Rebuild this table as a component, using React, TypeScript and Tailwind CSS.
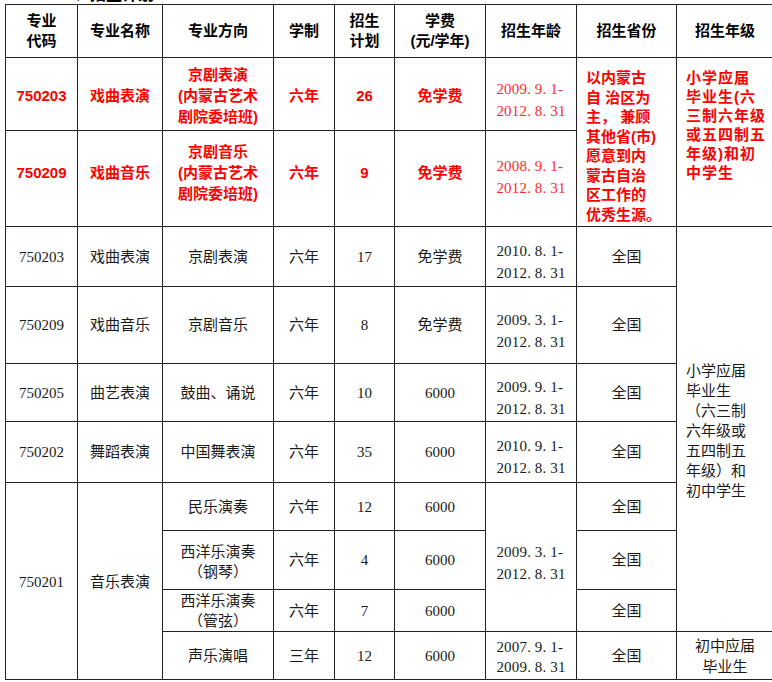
import React from "react";

const SANS = "font-['Liberation_Sans','Noto_Sans_CJK_SC',sans-serif]";
const SERIF = "font-['Liberation_Serif','Noto_Sans_CJK_SC',serif]";

function D({ s }: { s: string }) {
  return (
    <span className="inline-flex">
      {s.split("").map((c, i) => (
        <span key={i} className="inline-block w-[7.7px] text-left">
          {c}
        </span>
      ))}
    </span>
  );
}

function Dates({ a, b, red, pad }: { a: string; b: string; red?: boolean; pad: string }) {
  return (
    <div
      className={`flex flex-col items-center leading-[22px] text-[15px] ${SERIF} ${pad} ${
        red ? "text-[#ff2a2a]" : "text-[#1a1a1a]"
      }`}
    >
      <D s={a} />
      <D s={b} />
    </div>
  );
}

const td = "border border-[#222] text-center align-middle p-0";
const hd = `${td} ${SANS} font-bold text-[15px] leading-[20px] text-black`;
const rd = `${td} ${SANS} font-bold text-[15px] leading-[21px] text-[#ff0000]`;
const bd = `${td} ${SERIF} text-[15px] leading-[20px] text-[#1a1a1a]`;

export default function App() {
  return (
    <div className="w-[772px] h-[682px] overflow-hidden bg-white pl-[5px]">
      <div className="h-[4px] overflow-hidden flex items-end pl-[69px]">
        <span className={`${SANS} font-bold text-[16px] leading-[19px] whitespace-nowrap`}>、招生计划</span>
      </div>
      <table className="table-fixed border-collapse w-[768px]">
        <colgroup>
          <col className="w-[72px]" />
          <col className="w-[85px]" />
          <col className="w-[111px]" />
          <col className="w-[61px]" />
          <col className="w-[60px]" />
          <col className="w-[91px]" />
          <col className="w-[91px]" />
          <col className="w-[100px]" />
          <col className="w-[97px]" />
        </colgroup>
        <tbody>
          <tr className="h-[53px]">
            <td className={hd}>专业<br />代码</td>
            <td className={hd}>专业名称</td>
            <td className={hd}>专业方向</td>
            <td className={hd}>学制</td>
            <td className={hd}>招生<br />计划</td>
            <td className={hd}>学费<br />(元/学年)</td>
            <td className={hd}>招生年龄</td>
            <td className={hd}>招生省份</td>
            <td className={hd}>招生年级</td>
          </tr>
          <tr className="h-[73px]">
            <td className={`${rd} pt-[3px]`}>750203</td>
            <td className={`${rd} pt-[3px]`}>戏曲表演</td>
            <td className={`${rd} pt-[3px]`}>京剧表演<br />(内蒙古艺术<br />剧院委培班)</td>
            <td className={`${rd} pt-[3px]`}>六年</td>
            <td className={`${rd} pt-[3px]`}>26</td>
            <td className={`${rd} pt-[3px]`}>免学费</td>
            <td className={td}><Dates a="2009.9.1-" b="2012.8.31" red pad="pt-[12px]" /></td>
            <td rowSpan={2} className={`${rd} !text-left !align-top pt-[10px] pl-[9px] !leading-[19.5px] whitespace-nowrap`}>
              以内蒙古<br />自 治区为<br />主， 兼顾<br />其他省(市)<br />愿意到内<br />蒙古自治<br />区工作的<br />优秀生源。
            </td>
            <td rowSpan={2} className={`${rd} !text-left !align-top pt-[10px] pl-[9px] !leading-[19px] tracking-[1px] whitespace-nowrap`}>
              小学应届<br />毕业生(六<br />三制六年级<br />或五四制五<br />年级)和初<br />中学生
            </td>
          </tr>
          <tr className="h-[96px]">
            <td className={`${rd} pb-[12px]`}>750209</td>
            <td className={`${rd} pb-[12px]`}>戏曲音乐</td>
            <td className={`${rd} pb-[12px]`}>京剧音乐<br />(内蒙古艺术<br />剧院委培班)</td>
            <td className={`${rd} pb-[12px]`}>六年</td>
            <td className={`${rd} pb-[12px]`}>9</td>
            <td className={`${rd} pb-[12px]`}>免学费</td>
            <td className={td}><Dates a="2008.9.1-" b="2012.8.31" red pad="pb-[3px]" /></td>
          </tr>
          <tr className="h-[60px]">
            <td className={bd}>750203</td>
            <td className={bd}>戏曲表演</td>
            <td className={bd}>京剧表演</td>
            <td className={bd}>六年</td>
            <td className={bd}>17</td>
            <td className={bd}>免学费</td>
            <td className={td}><Dates a="2010.8.1-" b="2012.8.31" pad="pt-[10px]" /></td>
            <td className={bd}>全国</td>
            <td rowSpan={7} className={`${bd} !text-left pl-[9px] pt-[4px] whitespace-nowrap`}>
              小学应届<br />毕业生<br />（六三制<br />六年级或<br />五四制五<br />年级）和<br />初中学生
            </td>
          </tr>
          <tr className="h-[77px]">
            <td className={bd}>750209</td>
            <td className={bd}>戏曲音乐</td>
            <td className={bd}>京剧音乐</td>
            <td className={bd}>六年</td>
            <td className={bd}>8</td>
            <td className={bd}>免学费</td>
            <td className={td}><Dates a="2009.3.1-" b="2012.8.31" pad="pt-[12px]" /></td>
            <td className={bd}>全国</td>
          </tr>
          <tr className="h-[58px]">
            <td className={bd}>750205</td>
            <td className={bd}>曲艺表演</td>
            <td className={bd}>鼓曲、诵说</td>
            <td className={bd}>六年</td>
            <td className={bd}>10</td>
            <td className={bd}>6000</td>
            <td className={td}><Dates a="2009.9.1-" b="2012.8.31" pad="pt-[10px]" /></td>
            <td className={bd}>全国</td>
          </tr>
          <tr className="h-[61px]">
            <td className={bd}>750202</td>
            <td className={bd}>舞蹈表演</td>
            <td className={bd}>中国舞表演</td>
            <td className={bd}>六年</td>
            <td className={bd}>35</td>
            <td className={bd}>6000</td>
            <td className={td}><Dates a="2010.9.1-" b="2012.8.31" pad="pt-[10px]" /></td>
            <td className={bd}>全国</td>
          </tr>
          <tr className="h-[48px]">
            <td rowSpan={4} className={`${bd} pt-[2px]`}>750201</td>
            <td rowSpan={4} className={`${bd} pt-[2px]`}>音乐表演</td>
            <td className={bd}>民乐演奏</td>
            <td className={bd}>六年</td>
            <td className={bd}>12</td>
            <td className={bd}>6000</td>
            <td rowSpan={3} className={td}><Dates a="2009.3.1-" b="2012.8.31" pad="pt-[12px]" /></td>
            <td className={bd}>全国</td>
          </tr>
          <tr className="h-[59px]">
            <td className={`${bd} pt-[3px]`}>西洋乐演奏<br />（钢琴）</td>
            <td className={bd}>六年</td>
            <td className={bd}>4</td>
            <td className={bd}>6000</td>
            <td className={bd}>全国</td>
          </tr>
          <tr className="h-[42px]">
            <td className={bd}>西洋乐演奏<br />（管弦）</td>
            <td className={bd}>六年</td>
            <td className={bd}>7</td>
            <td className={bd}>6000</td>
            <td className={bd}>全国</td>
          </tr>
          <tr className="h-[48px]">
            <td className={bd}>声乐演唱</td>
            <td className={bd}>三年</td>
            <td className={bd}>12</td>
            <td className={bd}>6000</td>
            <td className={td}><Dates a="2007.9.1-" b="2009.8.31" pad="pt-[3px] !leading-[20px]" /></td>
            <td className={bd}>全国</td>
            <td className={`${bd} !leading-[21px] pt-[3px]`}>初中应届<br />毕业生</td>
          </tr>
        </tbody>
      </table>
    </div>
  );
}
